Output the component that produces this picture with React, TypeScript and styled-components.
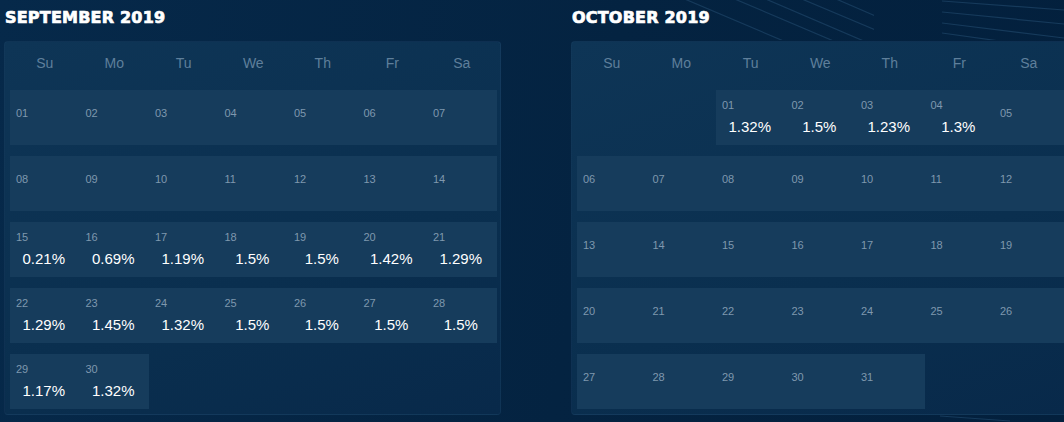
import React from 'react';
import styled, {createGlobalStyle} from 'styled-components';

type Day = {day: number; value?: string};
type Month = {title: string; offset: number; days: Day[]};

const WEEKDAYS = ['Su', 'Mo', 'Tu', 'We', 'Th', 'Fr', 'Sa'];

const makeDays = (count: number, values: Record<number, string>): Day[] =>
  Array.from({length: count}, (_, i) => ({day: i + 1, value: values[i + 1]}));

const MONTHS: Month[] = [
  {
    title: 'SEPTEMBER 2019',
    offset: 0,
    days: makeDays(30, {
      15: '0.21%',
      16: '0.69%',
      17: '1.19%',
      18: '1.5%',
      19: '1.5%',
      20: '1.42%',
      21: '1.29%',
      22: '1.29%',
      23: '1.45%',
      24: '1.32%',
      25: '1.5%',
      26: '1.5%',
      27: '1.5%',
      28: '1.5%',
      29: '1.17%',
      30: '1.32%',
    }),
  },
  {
    title: 'OCTOBER 2019',
    offset: 2,
    days: makeDays(31, {1: '1.32%', 2: '1.5%', 3: '1.23%', 4: '1.3%'}),
  },
];

const pad = (n: number) => (n < 10 ? `0${n}` : `${n}`);

const GlobalStyle = createGlobalStyle`
  html, body {
    margin: 0;
    padding: 0;
    background: #052747;
    overflow: hidden;
  }
  body {
    font-family: "Liberation Sans", Arial, sans-serif;
  }
`;

// faint diagonal lines drawn behind the calendars
const Backdrop = () => (
  <BackdropSvg width="1064" height="422" viewBox="0 0 1064 422">
    <defs>
      <clipPath id="left-pane">
        <rect x="660" y="0" width="214" height="40" />
      </clipPath>
      <clipPath id="right-pane">
        <rect x="942" y="0" width="122" height="40" />
      </clipPath>
      <clipPath id="bottom-pane">
        <rect x="920" y="410" width="144" height="12" />
      </clipPath>
    </defs>
    <g clipPath="url(#left-pane)" stroke="#163a5b" strokeWidth="1.2">
      <line x1="640" y1="-20" x2="800" y2="48" />
      <line x1="690" y1="-20" x2="850" y2="48" />
      <line x1="740" y1="-12" x2="880" y2="48" />
      <line x1="790" y1="-6" x2="880" y2="32" />
      <line x1="820" y1="-8" x2="880" y2="18" />
    </g>
    <g clipPath="url(#right-pane)" stroke="#163a5b" strokeWidth="1.2">
      <line x1="942" y1="1" x2="1064" y2="10" />
      <line x1="942" y1="12" x2="1064" y2="24" />
      <line x1="942" y1="23" x2="1064" y2="38" />
      <line x1="942" y1="33" x2="1064" y2="50" />
    </g>
    <g clipPath="url(#bottom-pane)" stroke="#163a5b" strokeWidth="1.2">
      <line x1="940" y1="416" x2="1010" y2="421" />
    </g>
  </BackdropSvg>
);

const Calendar: React.FC<{month: Month}> = ({month}) => {
  const slots: (Day | null)[] = [
    ...Array.from({length: month.offset}, () => null),
    ...month.days,
  ];
  while (slots.length % 7 !== 0) slots.push(null);

  return (
    <Column>
      <Title>{month.title}</Title>
      <Panel>
        <WeekHeader>
          {WEEKDAYS.map(w => (
            <WeekDay key={w}>{w}</WeekDay>
          ))}
        </WeekHeader>
        <Weeks>
          {slots.map((slot, i) =>
            slot ? (
              <Cell key={i} $hasValue={!!slot.value}>
                <DayNum>{pad(slot.day)}</DayNum>
                {slot.value && <Rate>{slot.value}</Rate>}
              </Cell>
            ) : (
              <Blank key={i} />
            )
          )}
        </Weeks>
      </Panel>
    </Column>
  );
};

export default function App() {
  return (
    <>
      <GlobalStyle />
      <Page>
        <Backdrop />
        {MONTHS.map(m => (
          <Calendar key={m.title} month={m} />
        ))}
      </Page>
    </>
  );
}

const Page = styled.div`
  position: relative;
  width: 1064px;
  height: 422px;
  overflow: hidden;
  display: flex;
  gap: 70px;
  padding-left: 4px;
  box-sizing: border-box;
  background: linear-gradient(100deg, #06294a 0%, #042341 55%, #03203d 100%);
`;

const BackdropSvg = styled.svg`
  position: absolute;
  left: 0;
  top: 0;
  pointer-events: none;
`;

const Column = styled.section`
  position: relative;
  flex: 0 0 497px;
  min-width: 0;
  display: flex;
  flex-direction: column;
`;

const Title = styled.h2`
  margin: 0;
  height: 41px;
  padding: 8px 0 0 1px;
  box-sizing: border-box;
  font-family: "DejaVu Sans", "Liberation Sans", sans-serif;
  font-size: 16px;
  font-weight: 700;
  line-height: 20px;
  letter-spacing: 0.2px;
  white-space: nowrap;
  color: #ffffff;
  -webkit-text-stroke: 0.7px #ffffff;
`;

const Panel = styled.div`
  height: 374px;
  padding: 0 3px 6px 5px;
  box-sizing: border-box;
  border-radius: 4px;
  border: 1px solid rgba(120, 160, 200, 0.06);
  background: linear-gradient(160deg, #0e3556 0%, #0a2f4f 60%, #08294a 100%);
`;

const WeekHeader = styled.div`
  display: grid;
  grid-template-columns: repeat(7, 69.5px);
  height: 42px;
  margin-bottom: 6px;
  align-items: center;
`;

const WeekDay = styled.div`
  text-align: center;
  font-size: 14px;
  color: #5f7f9b;
`;

const Weeks = styled.div`
  display: grid;
  grid-template-columns: repeat(7, 69.5px);
  grid-auto-rows: 55px;
  row-gap: 11px;
`;

const Cell = styled.div<{$hasValue: boolean}>`
  display: flex;
  flex-direction: column;
  padding: ${p => (p.$hasValue ? '8px' : '16px')} 0 0 6px;
  background: #163c5c;
`;

const Blank = styled.div``;

const DayNum = styled.span`
  font-size: 11px;
  line-height: 14px;
  color: #7f98ae;
`;

const Rate = styled.span`
  margin: 6px 0 0 -8px;
  text-align: center;
  font-size: 15px;
  line-height: 18px;
  color: #ffffff;
`;
